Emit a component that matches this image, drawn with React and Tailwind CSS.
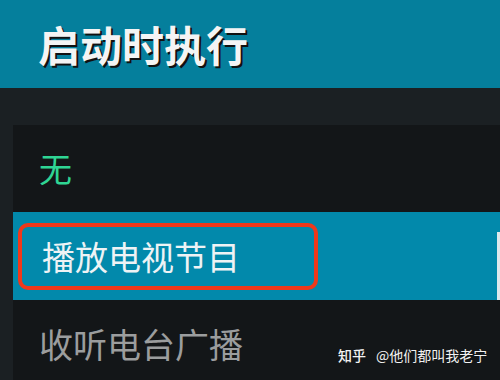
export default function App() {
  const font = { fontFamily: '"Noto Sans CJK SC", "Noto Sans", sans-serif' };

  return (
    <div
      className="relative w-[500px] h-[380px] overflow-hidden bg-[#1b2023]"
      style={font}
    >
      {/* Header */}
      <div className="h-[88px] bg-[#057f9c] flex items-center pl-[38px]">
        <div className="text-[42px] leading-none font-bold text-[#f4f4f4] [text-shadow:2px_2px_0_#111]">
          启动时执行
        </div>
      </div>

      {/* Options panel */}
      <div className="mt-[37px] ml-[13px] bg-[#131618] flex flex-col">
        <div className="h-[87px] flex items-center pl-[26px] text-[33px] leading-none text-[#2fd594]">
          无
        </div>
        <div className="h-[88px] bg-[#0289ab] flex items-center pl-[5px]">
          <div className="w-[300px] h-[67px] border-4 border-[#f0381a] rounded-[10px] flex items-center pl-[20px] text-[33px] leading-none text-[#eef3f5]">
            播放电视节目
          </div>
        </div>
        <div className="h-[88px] flex items-center pl-[26px] text-[34px] leading-none text-[#9b9d9e]">
          收听电台广播
        </div>
      </div>

      {/* edge of next column */}
      <div className="absolute left-[497px] top-[232px] w-[3px] h-[68px] bg-[#dfe9ec]" />

      {/* Watermark */}
      <div className="absolute left-[338px] top-[348px] text-[14px] leading-none text-[#f2f2f2] whitespace-nowrap">
        <span className="font-medium">知乎</span>
        <span className="ml-[10px]">@他们都叫我老宁</span>
      </div>
    </div>
  );
}
